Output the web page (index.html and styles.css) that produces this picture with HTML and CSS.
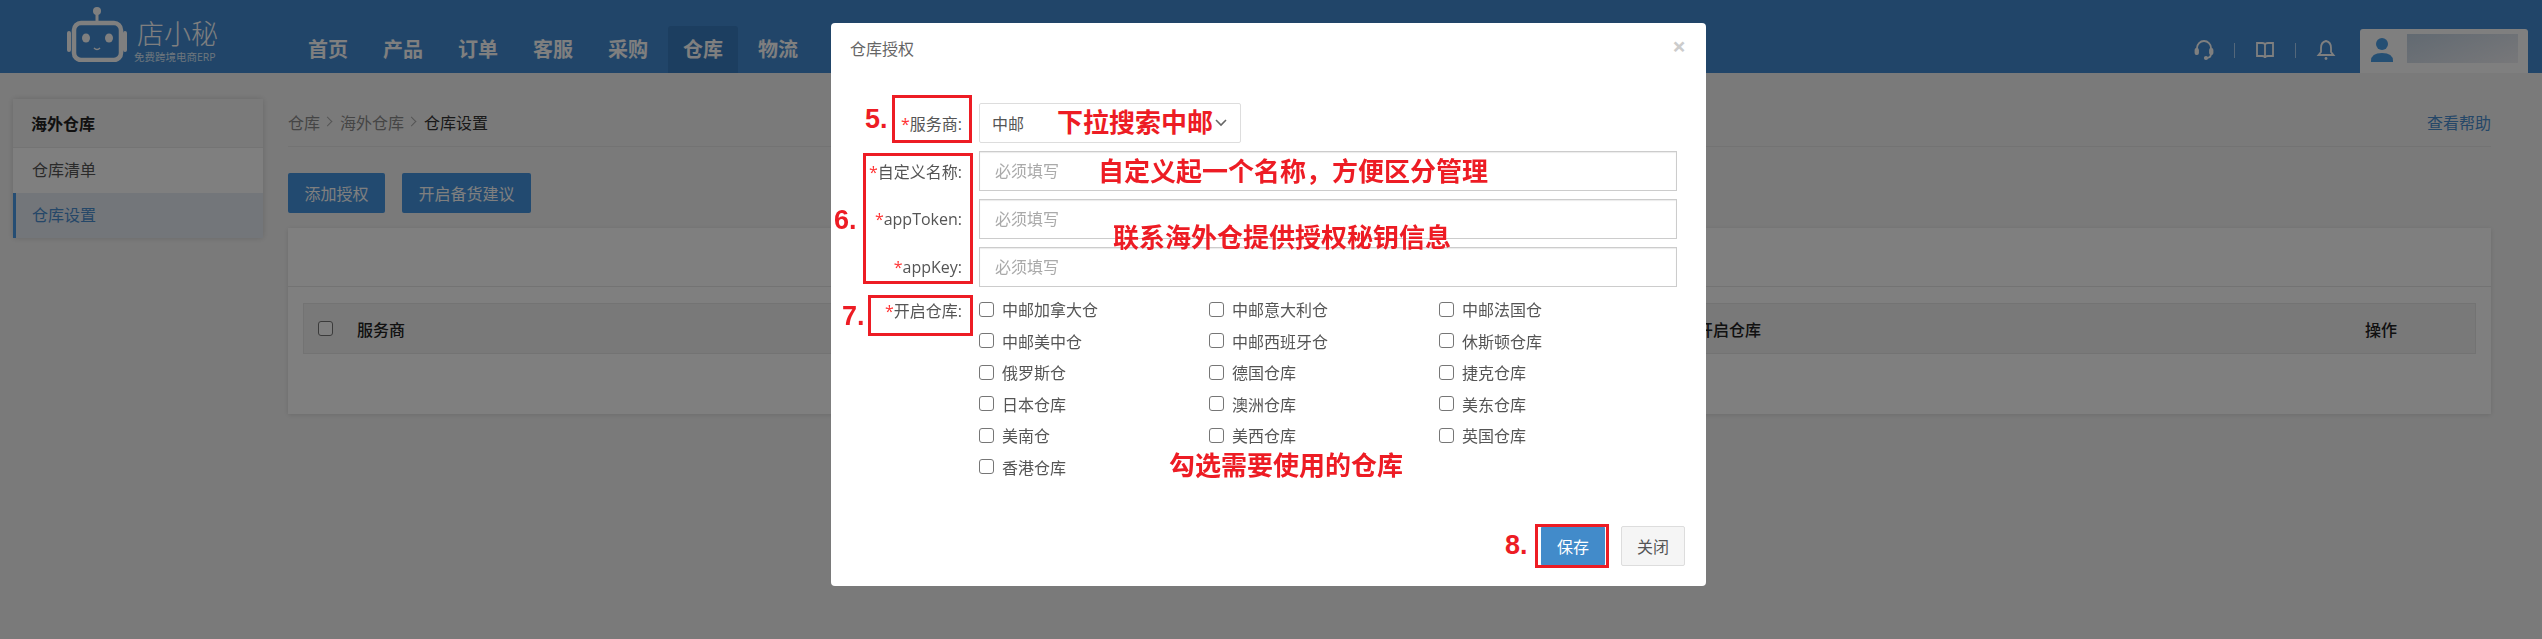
FILE: index.html
```html
<!DOCTYPE html>
<html lang="zh-CN">
<head>
    <meta charset="UTF-8">
    <title>仓库授权</title>
    <link rel="stylesheet" href="styles.css">
</head>
<body>
    <header class="topbar">
        <div class="logo">
            <svg class="logo-robot" width="62" height="56" viewBox="0 0 62 56">
                <circle cx="31" cy="5" r="4" fill="#fff"/>
                <path d="M31 8v8" stroke="#fff" stroke-width="3"/>
                <rect x="8" y="17" width="47" height="37" rx="7" fill="none" stroke="#fff" stroke-width="4.5"/>
                <path d="M3 27v17M59 27v17" stroke="#fff" stroke-width="4" stroke-linecap="round"/>
                <ellipse cx="20" cy="32" rx="4" ry="4.5" fill="#fff"/>
                <ellipse cx="43" cy="32" rx="4" ry="4.5" fill="#fff"/>
                <path d="M28 42q3 3 6 0" fill="none" stroke="#fff" stroke-width="1.5"/>
            </svg>
            <div class="logo-text">
                <div class="logo-name">店小秘</div>
                <div class="logo-sub">免费跨境电商ERP</div>
            </div>
        </div>
        <nav class="nav">
            <a class="nav-item">首页</a>
            <a class="nav-item">产品</a>
            <a class="nav-item">订单</a>
            <a class="nav-item">客服</a>
            <a class="nav-item">采购</a>
            <a class="nav-item nav-active">仓库</a>
            <a class="nav-item">物流</a>
        </nav>
        <div class="top-tools">
            <svg width="20" height="22" viewBox="0 0 20 22" fill="none" stroke="#fff" stroke-width="1.8">
                <path d="M3 11V9a7 7 0 0 1 14 0v2"/>
                <rect x="1.5" y="10" width="2.5" height="5" rx="1" fill="#fff"/>
                <rect x="16" y="10" width="2.5" height="5" rx="1" fill="#fff"/>
                <path d="M17 15q0 4-5 4"/>
                <circle cx="12" cy="19" r="1.2" fill="#fff"/>
            </svg>
            <span class="tool-sep"></span>
            <svg width="20" height="20" viewBox="0 0 20 20" fill="none" stroke="#fff" stroke-width="1.8">
                <path d="M2 3h5q3 0 3 2 0-2 3-2h5v13h-5q-3 0-3 2 0-2-3-2H2z"/>
                <path d="M10 5v13"/>
            </svg>
            <span class="tool-sep"></span>
            <svg width="20" height="22" viewBox="0 0 20 22" fill="none" stroke="#fff" stroke-width="1.8">
                <path d="M10 2q5 1 5 7v4l2.500 3h-15l2.500-3V9q0-6 5-7z"/>
                <circle cx="10" cy="19.500" r="1.400" fill="#fff" stroke="none"/>
            </svg>
            <div class="user-box">
                <svg width="22" height="26" viewBox="0 0 22 26" fill="#4a9ee6">
                    <circle cx="11" cy="6" r="6"/>
                    <path d="M0 23q0-8 11-8t11 8v1H0z"/>
                </svg>
                <div class="user-name"></div>
            </div>
        </div>
    </header>

    <div class="layout">
        <aside class="sidebar">
            <div class="side-title">海外仓库</div>
            <a class="side-item">仓库清单</a>
            <a class="side-item side-active">仓库设置</a>
        </aside>
        <main class="content">
            <div class="crumbs">
                <span class="crumb">仓库</span><span class="crumb-sep"></span>
                <span class="crumb">海外仓库</span><span class="crumb-sep"></span>
                <span class="crumb-current">仓库设置</span>
                <a class="help-link">查看帮助</a>
            </div>
            <div class="actions">
                <button class="btn-primary">添加授权</button>
                <button class="btn-primary">开启备货建议</button>
            </div>
            <section class="panel">
                <div class="panel-top"></div>
                <div class="panel-body">
                    <div class="table-head">
                        <span class="col-check"><input class="check" type="checkbox"></span>
                        <span>服务商</span>
                        <span>开启仓库</span>
                        <span>操作</span>
                    </div>
                </div>
            </section>
        </main>
    </div>

    <div class="backdrop"></div>

    <div class="modal">
        <div class="modal-head">
            <span class="modal-title">仓库授权</span>
            <span class="modal-close">×</span>
        </div>
        <div class="modal-body">
            <div class="form-row">
                <label class="form-label"><i>*</i>服务商:</label>
                <div class="select-box">中邮
                    <svg class="select-arrow" width="12" height="8" viewBox="0 0 12 8" fill="none" stroke="#666" stroke-width="1.6"><path d="M1 1l5 5 5-5"/></svg>
                </div>
            </div>
            <div class="form-row">
                <label class="form-label"><i>*</i>自定义名称:</label>
                <input class="text-input" type="text" placeholder="必须填写">
            </div>
            <div class="form-row">
                <label class="form-label"><i>*</i>appToken:</label>
                <input class="text-input" type="text" placeholder="必须填写">
            </div>
            <div class="form-row">
                <label class="form-label"><i>*</i>appKey:</label>
                <input class="text-input" type="text" placeholder="必须填写">
            </div>
            <div class="form-row form-row-top">
                <label class="form-label"><i>*</i>开启仓库:</label>
                <div class="wh-grid">
                    <label class="wh"><input class="check" type="checkbox">中邮加拿大仓</label>
                    <label class="wh"><input class="check" type="checkbox">中邮意大利仓</label>
                    <label class="wh"><input class="check" type="checkbox">中邮法国仓</label>
                    <label class="wh"><input class="check" type="checkbox">中邮美中仓</label>
                    <label class="wh"><input class="check" type="checkbox">中邮西班牙仓</label>
                    <label class="wh"><input class="check" type="checkbox">休斯顿仓库</label>
                    <label class="wh"><input class="check" type="checkbox">俄罗斯仓</label>
                    <label class="wh"><input class="check" type="checkbox">德国仓库</label>
                    <label class="wh"><input class="check" type="checkbox">捷克仓库</label>
                    <label class="wh"><input class="check" type="checkbox">日本仓库</label>
                    <label class="wh"><input class="check" type="checkbox">澳洲仓库</label>
                    <label class="wh"><input class="check" type="checkbox">美东仓库</label>
                    <label class="wh"><input class="check" type="checkbox">美南仓</label>
                    <label class="wh"><input class="check" type="checkbox">美西仓库</label>
                    <label class="wh"><input class="check" type="checkbox">英国仓库</label>
                    <label class="wh"><input class="check" type="checkbox">香港仓库</label>
                </div>
            </div>
        </div>
        <div class="modal-foot">
            <button class="btn-save">保存</button>
            <button class="btn-close">关闭</button>
        </div>

        <!-- red notes drawn on top of the screenshot -->
        <div class="mark mark-5"></div>
        <div class="mark mark-6"></div>
        <div class="mark mark-7"></div>
        <div class="mark mark-8"></div>
        <span class="step step-5">5.</span>
        <span class="step step-6">6.</span>
        <span class="step step-7">7.</span>
        <span class="step step-8">8.</span>
        <span class="note note-a">下拉搜索中邮</span>
        <span class="note note-b">自定义起一个名称，方便区分管理</span>
        <span class="note note-c">联系海外仓提供授权秘钥信息</span>
        <span class="note note-d">勾选需要使用的仓库</span>
    </div>
</body>
</html>
```

FILE: styles.css
```css
* {
    box-sizing: border-box;
}
html, body {
    margin: 0;
    height: 100%;
}
body {
    background-color: #f5f5f5;
    color: #333;
    font-family: "Open Sans", "Noto Sans CJK SC", sans-serif;
    font-size: 16px;
    overflow: hidden;
}
.check {
    width: 15px;
    height: 15px;
    margin: 0;
    appearance: none;
    background-color: #fff;
    border: 1.5px solid #767676;
    border-radius: 3px;
}

/* top bar */
.topbar {
    display: flex;
    align-items: flex-end;
    height: 73px;
    padding-left: 66px;
    background-color: #428bd3;
}
.logo {
    display: flex;
    align-self: flex-start;
    gap: 9px;
    padding-top: 6px;
    width: 227px;
}
.logo-name {
    color: #fff;
    font-size: 27px;
    font-weight: 300;
    line-height: 32px;
    margin-top: 12px;
}
.logo-sub {
    color: #dbeaf8;
    font-size: 10.5px;
    line-height: 14px;
    margin-left: -3px;
    white-space: nowrap;
}
.nav {
    display: flex;
    gap: 5px;
}
.nav-item {
    display: block;
    width: 70px;
    height: 47px;
    text-align: center;
    line-height: 48px;
    font-size: 20px;
    font-weight: bold;
    color: #fff;
    border-radius: 3px 3px 0 0;
}
.nav-active {
    background-color: #387cc0;
}
.top-tools {
    display: flex;
    align-items: center;
    gap: 20px;
    margin-left: auto;
    margin-right: 14px;
    height: 44px;
}
.tool-sep {
    width: 1px;
    height: 15px;
    background-color: #a8cff5;
    margin-top: -2px;
}
.top-tools > svg {
    margin-top: -2px;
}
.user-box {
    display: flex;
    align-items: center;
    gap: 14px;
    width: 168px;
    height: 44px;
    margin-left: 4px;
    padding: 0 10px 0 11px;
    background-color: #fff;
    border-radius: 3px 3px 0 0;
}
.user-name {
    flex: 1;
    height: 29px;
    margin-top: -5px;
    background: linear-gradient(160deg, #c4d4e4, #f0f0f4);
}

/* page */
.layout {
    display: flex;
    align-items: flex-start;
    gap: 25px;
    padding: 26px 51px 0 13px;
}
.sidebar {
    width: 250px;
    flex: none;
    background-color: #fff;
    box-shadow: 0 0 6px rgba(0, 0, 0, .15);
}
.side-title {
    height: 49px;
    padding-left: 18px;
    line-height: 50px;
    font-weight: bold;
    color: #222;
    background-color: #f5f5f5;
    border-bottom: 1px solid #e8e8e8;
}
.side-item {
    display: block;
    height: 45px;
    padding-left: 19px;
    line-height: 45px;
    color: #555;
}
.side-active {
    padding-left: 16px;
    color: #4a8fd0;
    background-color: #e6ecf5;
    border-left: 3px solid #4a9ae6;
}
.content {
    flex: 1;
}
.crumbs {
    display: flex;
    align-items: center;
    height: 48px;
    padding-bottom: 2px;
    color: #8a8a8a;
    border-bottom: 1px solid #e6e6e6;
}
.crumb-sep {
    width: 7px;
    height: 7px;
    margin: 0 9px 0 4px;
    border-top: 1px solid #aaa;
    border-right: 1px solid #aaa;
    transform: rotate(45deg);
}
.crumb-current {
    color: #333;
}
.help-link {
    margin-left: auto;
    color: #4a8fd0;
}
.actions {
    display: flex;
    gap: 17px;
    padding: 26px 0 15px;
}
.btn-primary {
    height: 40px;
    padding: 0 16.5px;
    color: #fff;
    font: inherit;
    background-color: #4494e0;
    border: 0;
    border-radius: 2px;
}
.panel {
    background-color: #fff;
    box-shadow: 0 1px 5px rgba(0, 0, 0, .12);
}
.panel-top {
    height: 59px;
    border-bottom: 1px solid #e6e6e6;
}
.panel-body {
    padding: 16px 15px 60px;
}
.table-head {
    display: grid;
    grid-template-columns: 53px 1340px 668px 1fr;
    align-items: center;
    height: 51px;
    font-weight: 500;
    color: #222;
    background-color: #f2f2f2;
    border: 1px solid #e6e6e6;
}
.table-head span {
    display: flex;
}
.col-check {
    padding-left: 14px;
}

/* dark layer and dialog */
.backdrop {
    position: fixed;
    inset: 0;
    background-color: rgba(0, 0, 0, .5);
}
.modal {
    position: absolute;
    left: 831px;
    top: 23px;
    width: 875px;
    height: 563px;
    background-color: #fff;
    border-radius: 4px;
}
.modal-head {
    display: flex;
    justify-content: space-between;
    padding: 15px 20px 15px 19px;
    color: #666;
}
.modal-title {
    line-height: 22px;
}
.modal-close {
    margin-top: -4px;
    color: #ccc;
    font-size: 24px;
    font-weight: bold;
    line-height: 24px;
}
.modal-body {
    display: flex;
    flex-direction: column;
    gap: 8px;
    padding-top: 28px;
}
.form-row {
    display: flex;
    align-items: center;
    height: 40px;
}
.form-label {
    width: 131px;
    flex: none;
    text-align: right;
    color: #555;
    white-space: nowrap;
}
.form-label i {
    color: #f33;
    font-style: normal;
}
.select-box {
    display: flex;
    align-items: center;
    justify-content: space-between;
    width: 262px;
    height: 40px;
    margin-left: 17px;
    padding: 0 13px 0 12px;
    color: #555;
    border: 1px solid #ddd;
    border-radius: 2px;
}
.text-input {
    width: 698px;
    height: 40px;
    margin-left: 17px;
    padding: 0 15px;
    font: inherit;
    border: 1px solid #ccc;
    box-shadow: inset 0 1px 1px rgba(0, 0, 0, .08);
}
.text-input::placeholder {
    color: #aaa;
}
.form-row-top {
    align-items: flex-start;
    height: auto;
    margin-top: 2px;
}
.form-row-top .form-label {
    padding-top: 1px;
}
.wh-grid {
    display: grid;
    grid-template-columns: repeat(3, 230px);
    grid-auto-rows: 31.5px;
    margin-left: 17px;
}
.wh {
    display: flex;
    align-items: center;
    gap: 8px;
    height: 24px;
    color: #555;
    white-space: nowrap;
}
.modal-foot {
    position: absolute;
    right: 21px;
    bottom: 20px;
    display: flex;
    gap: 16px;
}
.btn-save, .btn-close {
    width: 64px;
    height: 40px;
    font: inherit;
    border-radius: 2px;
}
.btn-save {
    color: #fff;
    background-color: #428bca;
    border: 0;
}
.btn-close {
    color: #555;
    background-color: #f5f5f5;
    border: 1px solid #ddd;
}
.mark {
    position: absolute;
    border: 3px solid #ed1c24;
}
.mark-5 { left: 61px; top: 72px; width: 80px; height: 48px; }
.mark-6 { left: 32px; top: 130px; width: 110px; height: 131px; }
.mark-7 { left: 37px; top: 272px; width: 105px; height: 41px; }
.mark-8 { left: 704px; top: 501px; width: 74px; height: 44px; }
.step, .note {
    position: absolute;
    color: #ed1c24;
    font-weight: bold;
    white-space: nowrap;
}
.step {
    font-family: "Liberation Sans", sans-serif;
    font-size: 27px;
    line-height: 32px;
}
.step-5 { left: 34px; top: 80px; }
.step-6 { left: 3px; top: 181px; }
.step-7 { left: 11px; top: 277px; }
.step-8 { left: 674px; top: 506px; }
.note {
    font-size: 26px;
    line-height: 32px;
}
.note-a { left: 226px; top: 83px; }
.note-b { left: 267px; top: 132px; }
.note-c { left: 282px; top: 198px; }
.note-d { left: 338px; top: 426px; }
```
